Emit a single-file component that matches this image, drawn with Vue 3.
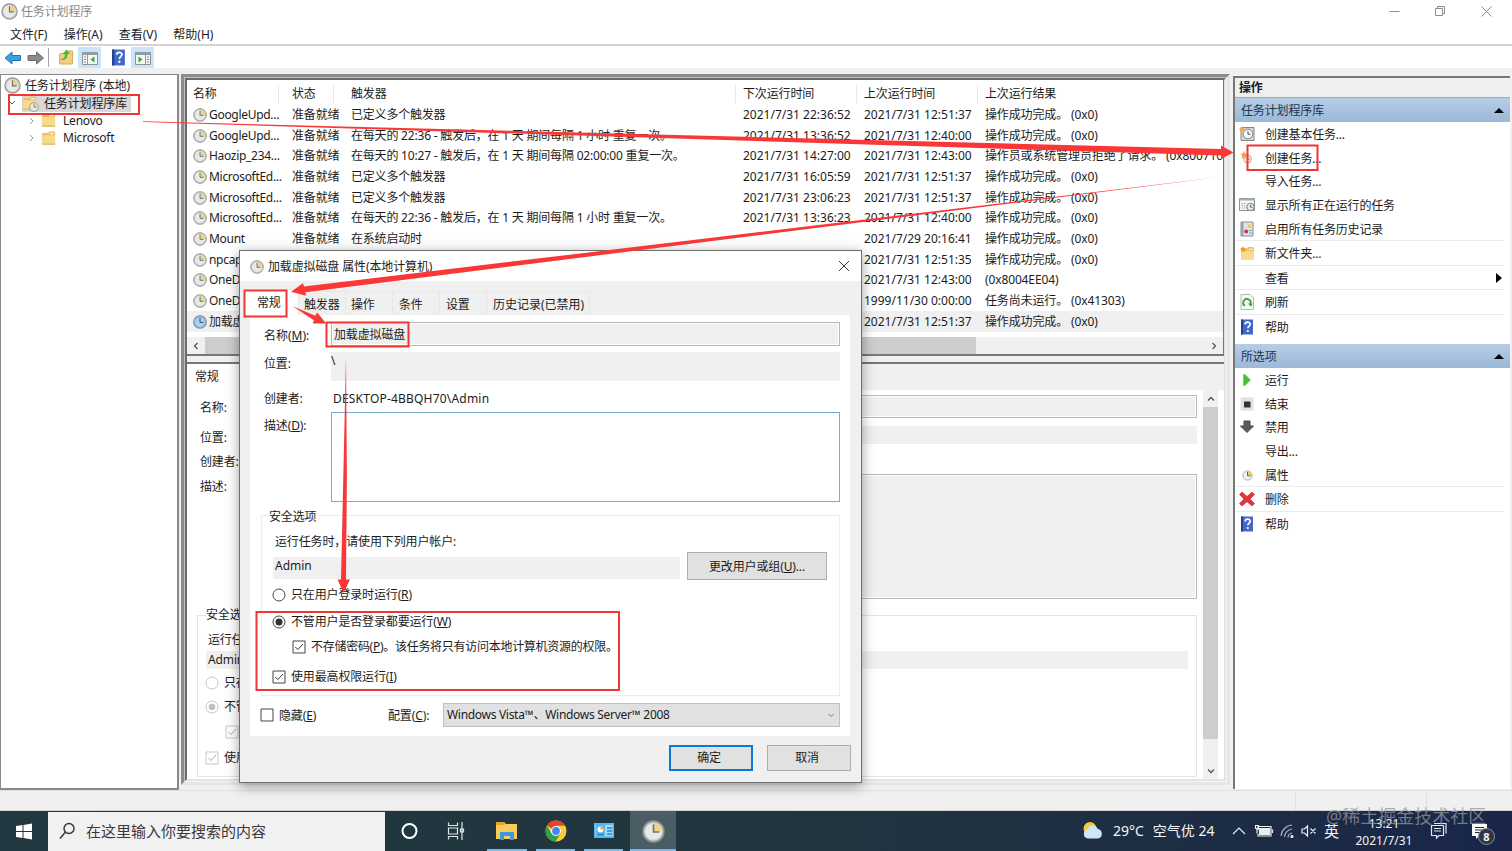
<script setup>
const menus = ['文件(F)', '操作(A)', '查看(V)', '帮助(H)']
const ok = '操作成功完成。 (0x0)'
const tasks = [
  { n: 'GoogleUpd...', t: '已定义多个触发器', next: '2021/7/31 22:36:52', last: '2021/7/31 12:51:37', r: ok },
  { n: 'GoogleUpd...', t: '在每天的 22:36 - 触发后，在 1 天 期间每隔 1 小时 重复一次。', next: '2021/7/31 13:36:52', last: '2021/7/31 12:40:00', r: ok },
  { n: 'Haozip_234...', t: '在每天的 10:27 - 触发后，在 1 天 期间每隔 02:00:00 重复一次。', next: '2021/7/31 14:27:00', last: '2021/7/31 12:43:00', r: '操作员或系统管理员拒绝了请求。 (0x800710' },
  { n: 'MicrosoftEd...', t: '已定义多个触发器', next: '2021/7/31 16:05:59', last: '2021/7/31 12:51:37', r: ok },
  { n: 'MicrosoftEd...', t: '已定义多个触发器', next: '2021/7/31 23:06:23', last: '2021/7/31 12:51:37', r: ok },
  { n: 'MicrosoftEd...', t: '在每天的 22:36 - 触发后，在 1 天 期间每隔 1 小时 重复一次。', next: '2021/7/31 13:36:23', last: '2021/7/31 12:40:00', r: ok },
  { n: 'Mount', t: '在系统启动时', next: '', last: '2021/7/29 20:16:41', r: ok },
  { n: 'npcap', t: '', next: '', last: '2021/7/31 12:51:35', r: ok },
  { n: 'OneD', t: '', next: '', last: '2021/7/31 12:43:00', r: '(0x8004EE04)' },
  { n: 'OneD', t: '', next: '', last: '1999/11/30 0:00:00', r: '任务尚未运行。 (0x41303)' },
  { n: '加载虚', t: '', next: '', last: '2021/7/31 12:51:37', r: ok, sel: true },
]
const groupA = [
  { i: 'basic', t: '创建基本任务...' },
  { i: 'new', t: '创建任务...' },
  { i: '', t: '导入任务...' },
  { i: 'running', t: '显示所有正在运行的任务' },
  { i: 'history', t: '启用所有任务历史记录', line: true },
  { i: 'folder', t: '新文件夹...', line: true },
  { i: '', t: '查看', line: true, more: true },
  { i: 'refresh', t: '刷新', line: true },
  { i: 'help', t: '帮助' },
]
const groupB = [
  { i: 'play', t: '运行' },
  { i: 'stop', t: '结束' },
  { i: 'down', t: '禁用' },
  { i: '', t: '导出...' },
  { i: 'props', t: '属性', line: true },
  { i: 'delete', t: '删除', line: true },
  { i: 'help', t: '帮助' },
]
</script>

<template>
  <div class="screen">
    <svg class="defs" width="0" height="0">
      <defs>
        <symbol id="clock" viewBox="0 0 16 16">
          <circle cx="8" cy="8" r="7.2" fill="#d0d0ce" stroke="#939391" stroke-width="1.1" />
          <circle cx="8" cy="8" r="5.6" fill="#e6ebea" />
          <path d="M8 8V2.400A5.600 5.600 0 0 1 13.600 8z" fill="#ecd583" />
          <path d="M8 3v5.400h4" fill="none" stroke="#6a757a" stroke-width="1.1" />
        </symbol>
        <symbol id="clockblue" viewBox="0 0 16 16">
          <circle cx="8" cy="8" r="7.2" fill="#a3bfd6" stroke="#6f8ba6" stroke-width="1.2" />
          <circle cx="8" cy="8" r="5.4" fill="#a9cfee" />
          <path d="M8 3v5.400h4" fill="none" stroke="#30506d" stroke-width="1.1" />
        </symbol>
        <symbol id="folderi" viewBox="0 0 16 16">
          <path d="M1 3l1-1h6l1-1.400h5l1 1V14H1z" fill="#e9c163" />
          <path d="M1 4.500h14V14H1z" fill="#f8db8a" />
          <path d="M9.500 2.800h4" stroke="#fff" stroke-width="1.200" />
          <path d="M1 14h14" stroke="#d8ad4c" />
        </symbol>
        <symbol id="help" viewBox="0 0 16 16">
          <path d="M2 .5h12v15H2z" fill="#4368c9" />
          <path d="M2 .5h2v15H2z" fill="#24408f" />
          <path d="M6.200 5.400c0-3 5-3 5-.2 0 1.900-2.300 2-2.300 4.100" fill="none" stroke="#fff" stroke-width="1.700" />
          <circle cx="8.800" cy="12" r="1.100" fill="#fff" />
        </symbol>
        <symbol id="basic" viewBox="0 0 16 16">
          <path d="M2 1.500h13v13H2z" fill="#d8d6d0" stroke="#8b8880" />
          <circle cx="9" cy="8" r="4.800" fill="#f5f7f8" stroke="#7c868c" />
          <path d="M9 5v3.200h2.500" fill="none" stroke="#555" />
          <path d="M3 0l1 2 2.200.4L4.600 4 5 6 3 5 1 6l.4-2L0 2.400 2.200 2z" fill="#f2a93b" />
        </symbol>
        <symbol id="new" viewBox="0 0 16 16">
          <circle cx="8.500" cy="9" r="4" fill="#f3e7dc" stroke="#d0a894" />
          <path d="M8.500 7v2.200h2.500" fill="none" stroke="#a98" />
          <path d="M5 1l1.200 2.500L9 4 7 6l.4 2.800L5 7.500 2.600 8.800 3 6 1.500 4l2.300-.5z" fill="#f5a148" />
        </symbol>
        <symbol id="running" viewBox="0 0 16 16">
          <path d="M.5 1.500h15v12H.5z" fill="#f4f4f2" stroke="#8d9296" />
          <path d="M.5 1.500h15v2H.5z" fill="#a9adb0" />
          <path d="M2.500 6.500h4M2.500 8.800h4M2.500 11h4" stroke="#aaa" stroke-dasharray="1.500 1" />
          <circle cx="11.500" cy="10" r="3.700" fill="#e8efe8" stroke="#75827c" />
          <path d="M11.500 8v2.200h2" fill="none" stroke="#4c7a5c" />
        </symbol>
        <symbol id="history" viewBox="0 0 16 16">
          <path d="M2 1h12v14H2z" fill="#dfe3ea" stroke="#848b98" />
          <path d="M2 1h2.500v14H2z" fill="#9aa2b3" />
          <circle cx="10.500" cy="5" r="2" fill="#ead155" />
          <circle cx="7.200" cy="10.500" r="2" fill="#cf3346" />
          <path d="M10 9.500h3M10 12h3" stroke="#8aa0c4" />
        </symbol>
        <symbol id="folder" viewBox="0 0 16 16">
          <path d="M2 4.500l1-1h5l1-1.400h5l1 1V14.500H2z" fill="#e9c163" />
          <path d="M2 6h13v8.500H2z" fill="#f8db8a" />
          <path d="M10 4.200h4" stroke="#fff" />
          <path d="M4 1l1 2 2.200.4L5.600 5 6 7 4 6 2 7l.4-2L1 3.400 3.200 3z" fill="#ef9a25" />
        </symbol>
        <symbol id="refresh" viewBox="0 0 16 16">
          <path d="M2 .5h9l3.500 3.500v11.500H2z" fill="#f8faf8" stroke="#b4bbb4" />
          <path d="M6 11.800A3.700 3.700 0 1 1 11.400 10" fill="none" stroke="#3fa53c" stroke-width="1.900" />
          <path d="M8.700 9.400h5l-1.500 3.400z" fill="#3fa53c" />
        </symbol>
        <symbol id="play" viewBox="0 0 16 16"><path d="M4.500 2.500h1.500L11.500 8 6 13.500H4.500z" fill="#49be35" stroke="#7ed36c" /></symbol>
        <symbol id="stop" viewBox="0 0 16 16"><path d="M1.500 1.500h13v13h-13z" fill="#e2e2e2" /><path d="M5 5.500h6.500v6H5z" fill="#333" /></symbol>
        <symbol id="down" viewBox="0 0 16 16"><path d="M5 2h6v5h3.500L8 13.500 1.500 7H5z" fill="#5b5b5b" stroke="#484848" /></symbol>
        <symbol id="props" viewBox="0 0 16 16">
          <circle cx="8.500" cy="8.500" r="4.600" fill="#eef3f6" stroke="#a3adb3" />
          <path d="M8.500 8.500V4a4.500 4.500 0 0 1 4.500 4.500z" fill="#ecd067" />
          <path d="M8.500 5v3.800h3" fill="none" stroke="#3f6a8c" />
        </symbol>
        <symbol id="delete" viewBox="0 0 16 16">
          <path d="M3 1l5 4.500L13 1l2.500 2.500L11 8l4.500 4.500L13 15l-5-4.300L3 15 .5 12.500 5 8 .5 3.500z" fill="#e2343a" stroke="#b3252b" stroke-width=".6" />
        </symbol>
      </defs>
    </svg>

    <header class="title">
      <svg class="ic17"><use href="#clock" /></svg>
      <span>任务计划程序</span>
      <svg class="winctl" viewBox="0 0 110 14" width="110" height="14">
        <path d="M3.500 7.500h10M49.500 4.500h7v7h-7zM51.500 4.500v-2h7v7h-2M95.500 2.500l10 10M105.500 2.500l-10 10" fill="none" stroke="#8c8c8c" />
      </svg>
    </header>
    <nav class="menu"><span v-for="m in menus" :key="m">{{ m }}</span></nav>
    <div class="toolbar">
      <svg viewBox="0 0 160 24" width="160" height="24">
        <path d="M5 12l7-6v3.500h8.500v5H12V18z" fill="#37a3e4" stroke="#2377b4" />
        <path d="M43.500 12l-7-6v3.500H28v5h8.500V18z" fill="#8b8b8b" stroke="#6d6d6d" />
        <path d="M48.500 2v19" stroke="#a5a5a5" />
        <path d="M59.500 8l6-1 1-2h6v13H59.500z" fill="#f0d080" stroke="#d5ad55" />
        <path d="M61 13c3 0 4-2 4-5h-2.500l4-4.500 3.500 4.500h-2.500c0 4-2 6-6 6z" fill="#4cb53a" />
        <path d="M78 1h23v21H78zM131 1h23v21h-23z" fill="#cce4f7" />
        <path d="M82.500 6.500h15v12h-15zM135.500 6.500h15v12h-15z" fill="#f6f6f6" stroke="#8b9094" />
        <path d="M82 6h16v3H82zM135 6h16v3h-16z" fill="#969b9f" />
        <path d="M87.500 9v9M145.500 9v9" stroke="#9a9a9a" />
        <path d="M84 11h2M84 13.500h2M84 16h2M147 11h2M147 13.500h2M147 16h2" stroke="#888" />
        <path d="M94.500 10.500v6l-4-3zM138.500 10.500v6l4-3z" fill="#39a83a" />
        <use href="#help" x="110" y="3" width="17" height="17" />
      </svg>
    </div>

    <main class="work">
      <aside class="tree">
        <div class="node"><svg class="ic17"><use href="#clock" /></svg><span>任务计划程序 (本地)</span></div>
        <div class="node lib">
          <svg class="chev" viewBox="0 0 8 8"><path d="M1 2l3 3 3-3" fill="none" stroke="#555" /></svg>
          <div class="hl">
            <svg width="17" height="16" viewBox="0 0 17 16"><use href="#folderi" width="15" height="15" /><use href="#clock" x="7" y="6" width="10" height="10" /></svg>
            <span>任务计划程序库</span>
          </div>
        </div>
        <div v-for="f in ['Lenovo', 'Microsoft']" :key="f" class="node sub">
          <svg class="chev" viewBox="0 0 8 8"><path d="M3 1l3 3-3 3" fill="none" stroke="#999" /></svg>
          <svg class="ic15"><use href="#folderi" /></svg><span>{{ f }}</span>
        </div>
      </aside>

      <section class="frame"><div class="frame2"><div class="frame3">
        <div class="list">
          <div class="cols head">
            <span>名称</span><span>状态</span><span>触发器</span><span>下次运行时间</span><span>上次运行时间</span><span>上次运行结果</span>
          </div>
          <div v-for="(k, i) in tasks" :key="i" class="cols row" :class="{ sel: k.sel }">
            <span class="nm"><svg class="ic14"><use :href="k.sel ? '#clockblue' : '#clock'" /></svg>{{ k.n }}</span>
            <span>准备就绪</span><span class="trg">{{ k.t }}</span><span class="num">{{ k.next }}</span><span class="num">{{ k.last }}</span><span>{{ k.r }}</span>
          </div>
          <div class="hscroll">
            <svg viewBox="0 0 8 8"><path d="M5.500 1L2.500 4l3 3" fill="none" stroke="#555" stroke-width="1.300" /></svg>
            <i></i>
            <svg viewBox="0 0 8 8"><path d="M2.500 1l3 3-3 3" fill="none" stroke="#555" stroke-width="1.300" /></svg>
          </div>
        </div>
        <div class="detail">
          <div class="dtabs"><span>常规</span><i></i></div>
          <div class="dbody">
            <div class="dform">
              <div class="drow r1"><label>名称:</label><b class="bx"></b></div>
              <div class="drow r2"><label>位置:</label><b></b></div>
              <div class="drow r3"><label>创建者:</label></div>
              <div class="drow r4"><label>描述:</label><b class="bx"></b></div>
              <div class="dgroup">
                <span class="legend">安全选</span>
                <p>运行任</p>
                <p class="dadmin">Admin</p>
                <p class="opt o1"><svg class="ic14" viewBox="0 0 14 14"><circle cx="7" cy="7" r="6" fill="#fff" stroke="#c6c6c6" /></svg>只在</p>
                <p class="opt o2"><svg class="ic14" viewBox="0 0 14 14"><circle cx="7" cy="7" r="6" fill="#fff" stroke="#c6c6c6" /><circle cx="7" cy="7" r="3.300" fill="#c0c0c0" /></svg>不管</p>
                <p class="opt o3"><svg class="ic14" viewBox="0 0 14 14"><path d="M1 1h12v12H1z" fill="#fff" stroke="#c6c6c6" /><path d="M3.500 7l2.500 2.500L11 4" fill="none" stroke="#aaa" /></svg></p>
                <p class="opt o4"><svg class="ic14" viewBox="0 0 14 14"><path d="M1 1h12v12H1z" fill="#fff" stroke="#c6c6c6" /><path d="M3.500 7l2.500 2.500L11 4" fill="none" stroke="#aaa" /></svg>使用</p>
              </div>
            </div>
            <div class="vscroll">
              <svg viewBox="0 0 8 8"><path d="M1 5.500l3-3 3 3" fill="none" stroke="#555" stroke-width="1.300" /></svg>
              <i></i>
              <svg viewBox="0 0 8 8"><path d="M1 2.500l3 3 3-3" fill="none" stroke="#555" stroke-width="1.300" /></svg>
            </div>
          </div>
        </div>
      </div></div></section>

      <aside class="actions">
        <h3>操作</h3>
        <div class="sec"><span>任务计划程序库</span><i class="up"></i></div>
        <ul class="ga">
          <li v-for="a in groupA" :key="a.t" :class="{ line: a.line }">
            <svg class="ic16"><use v-if="a.i" :href="'#' + a.i" /></svg><span>{{ a.t }}</span><i v-if="a.more" class="more"></i>
          </li>
        </ul>
        <div class="sec"><span>所选项</span><i class="up"></i></div>
        <ul>
          <li v-for="a in groupB" :key="a.t" :class="{ line: a.line }">
            <svg class="ic16"><use v-if="a.i" :href="'#' + a.i" /></svg><span>{{ a.t }}</span>
          </li>
        </ul>
      </aside>
    </main>
    <div class="status"><i></i><i></i></div>

    <footer class="taskbar">
      <div class="start"><svg width="17" height="17" viewBox="0 0 17 17"><path d="M1 3l6.500-1v6H1zM8.500 1.900L17 .5V8H8.500zM1 9h6.500v6L1 14zM8.500 9H17v7.500l-8.500-1.400z" fill="#fff" /></svg></div>
      <div class="search">
        <svg width="18" height="18" viewBox="0 0 18 18"><circle cx="11" cy="6.500" r="5" fill="none" stroke="#333" stroke-width="1.400" /><path d="M7.500 10L2 16.500" stroke="#333" stroke-width="1.400" /></svg>
        <span>在这里输入你要搜索的内容</span>
      </div>
      <div class="app"><svg width="20" height="20" viewBox="0 0 20 20"><circle cx="10.500" cy="10" r="7" fill="none" stroke="#fff" stroke-width="2" /></svg></div>
      <div class="app"><svg width="20" height="20" viewBox="0 0 20 20"><path d="M2.500 1.500v3h9v-3M2.500 18.500v-3h9v3M2.500 7h9v6h-9zM16 1v18M14.500 8h3v3h-3z" fill="none" stroke="#dfe6e8" stroke-width="1.200" /></svg></div>
      <div class="app on w1"><svg width="24" height="22" viewBox="0 0 24 22"><path d="M1 2h8l2 2h11v15H1z" fill="#f7cc5c" /><path d="M1 2h8l1 3H1z" fill="#e6a325" /><path d="M5 20v-8h14v8h-4v-4H9v4z" fill="#3f97dc" /></svg></div>
      <div class="app on w2">
        <svg width="22" height="22" viewBox="0 0 22 22">
          <circle cx="11" cy="11" r="10.500" fill="#fccb35" />
          <path d="M11 11L1.900 5.800A10.500 10.500 0 0 1 20.100 5.800H11z" fill="#e24335" />
          <path d="M1.900 5.800A10.500 10.500 0 0 0 10.500 21.500L15.500 13.500 11 11 6.500 13.500z" fill="#2da14c" />
          <circle cx="11" cy="11" r="5" fill="#fff" /><circle cx="11" cy="11" r="3.900" fill="#4285f4" />
        </svg>
      </div>
      <div class="app on w2">
        <svg width="22" height="20" viewBox="0 0 22 20"><path d="M1 2h20v15H1z" fill="#4fbcf0" /><path d="M2.500 4h17v11h-17z" fill="#a5dcf8" /><path d="M3 4h9v11H3z" fill="#58b6e8" /><circle cx="7.500" cy="8.500" r="3" fill="#fff" /><path d="M7.500 8.500v-3a3 3 0 0 1 3 3z" fill="#f3a33a" /><path d="M4.500 13.500h6M14 7h5M14 10h5M14 13h5" stroke="#2883c2" stroke-width="1.300" /></svg>
      </div>
      <div class="app active"><svg width="23" height="23"><use href="#clock" /></svg></div>
      <div class="weather">
        <svg width="22" height="20" viewBox="0 0 22 20"><circle cx="8" cy="7.500" r="6.500" fill="#f9c643" /><path d="M6 17.500a4.500 4.500 0 0 1-.5-8.900A5.500 5.500 0 0 1 15.800 8a4.900 4.900 0 0 1 .6 9.500z" fill="#cfe6f6" /></svg>
        <span>29°C</span><span>空气优 24</span>
      </div>
      <svg class="tray" width="84" height="20" viewBox="0 0 84 20">
        <g fill="none" stroke="#e8edf2" stroke-width="1.200">
          <path d="M1 13l6-6 6 6" />
          <path d="M27.500 7.500h10v6h-10z" fill="#e8edf2" /><path d="M26 9v-3.500h13v9.500H26v-2M40.500 8.500v3.500M23.500 4.500v3h3v-3zM25 7.500v5" />
          <path d="M49 15A12 12 0 0 1 60 4M52.500 16A8.500 8.500 0 0 1 60 8M56 16.500a5 5 0 0 1 4-4.500" stroke="#a9b3c2" /><circle cx="60" cy="15.500" r="1" fill="#e8edf2" />
          <path d="M70 8h2.500l3-3v10l-3-3H70zM78.500 7.500l5 5M83.500 7.500l-5 5" />
        </g>
      </svg>
      <span class="ime">英</span>
      <div class="time"><span>13:21</span><span>2021/7/31</span></div>
      <svg class="note" width="18" height="18" viewBox="0 0 18 18"><path d="M1.500 3.500h12v10H9l-2.500 2.500v-2.500h-5zM4 1.500h12v10M4 6.500h7M4 9h7" fill="none" stroke="#dfe6ee" stroke-width="1.200" /></svg>
      <div class="bell">
        <svg width="18" height="18" viewBox="0 0 18 18"><path d="M1 2h15v12H8l-3 3v-3H1z" fill="#fff" /><path d="M4 5.500h9M4 8h9M4 10.500h6" stroke="#1b2947" stroke-width="1.200" /></svg>
        <b>8</b>
      </div>
    </footer>

    <section class="dialog">
      <div class="dlgtitle">
        <svg class="ic14"><use href="#clock" /></svg><span>加载虚拟磁盘 属性(本地计算机)</span>
        <svg width="12" height="12" viewBox="0 0 12 12"><path d="M1 1l10 10M11 1L1 11" stroke="#333" /></svg>
      </div>
      <div class="tabs"><span class="cur">常规</span><span>触发器</span><span>操作</span><span>条件</span><span>设置</span><span>历史记录(已禁用)</span></div>
      <div class="page">
        <div class="f f1"><label>名称(<u>M</u>):</label><div class="inp"><span>加载虚拟磁盘</span></div></div>
        <div class="f f2"><label>位置:</label><div class="fill">\</div></div>
        <div class="f f3"><label>创建者:</label><span>DESKTOP-4BBQH70\Admin</span></div>
        <div class="f f4"><label>描述(<u>D</u>):</label><div class="area"></div></div>
        <div class="group">
          <span class="legend">安全选项</span>
          <p class="tip">运行任务时，请使用下列用户帐户:</p>
          <div class="acct"><div>Admin</div><button>更改用户或组(<u>U</u>)...</button></div>
          <p class="opt a"><svg class="ic14" viewBox="0 0 14 14"><circle cx="7" cy="7" r="6" fill="#fff" stroke="#444" /></svg>只在用户登录时运行(<u>R</u>)</p>
          <p class="opt b"><svg class="ic14" viewBox="0 0 14 14"><circle cx="7" cy="7" r="6" fill="#fff" stroke="#444" /><circle cx="7" cy="7" r="3.500" fill="#333" /></svg>不管用户是否登录都要运行(<u>W</u>)</p>
          <p class="opt c"><svg class="ic14" viewBox="0 0 14 14"><path d="M1 1h12v12H1z" fill="#fff" stroke="#444" /><path d="M3.300 7l2.500 2.500L11 4" fill="none" stroke="#333" /></svg>不存储密码(<u>P</u>)。该任务将只有访问本地计算机资源的权限。</p>
          <p class="opt d"><svg class="ic14" viewBox="0 0 14 14"><path d="M1 1h12v12H1z" fill="#fff" stroke="#444" /><path d="M3.300 7l2.500 2.500L11 4" fill="none" stroke="#333" /></svg>使用最高权限运行(<u>I</u>)</p>
        </div>
        <div class="conf">
          <svg class="ic14" viewBox="0 0 14 14"><path d="M1 1h12v12H1z" fill="#fff" stroke="#444" /></svg>
          <span class="hid">隐藏(<u>E</u>)</span><span class="cfg">配置(<u>C</u>):</span>
          <div class="select"><span>Windows Vista™、Windows Server™ 2008</span><svg width="8" height="8" viewBox="0 0 8 8"><path d="M1.500 3L4 5.500 6.500 3" fill="none" stroke="#777" /></svg></div>
        </div>
      </div>
      <div class="btns"><button class="ok">确定</button><button>取消</button></div>
    </section>

    <svg class="marks" viewBox="0 0 1512 851" width="1512" height="851">
      <g fill="none" stroke="#f03535" stroke-width="2">
        <rect x="9" y="95" width="130" height="19" />
        <rect x="1247.500" y="145.500" width="70" height="24.500" />
        <rect x="244.500" y="290.500" width="42" height="26" />
        <rect x="326.500" y="322.500" width="82" height="24" />
        <rect x="256.500" y="612" width="362.500" height="78" />
      </g>
      <g fill="#fa3737">
        <path d="M143 121.300L1221 149v-3.500l12.500 7L1221 159v-3.500L143 122z" />
        <path d="M1220 177L304 286.500l-1-3.300-12 8.600 15 4-.6-3.500z" />
        <path d="M292.700 306.300l22.500 9.500 2-3.200 9 10.800-13.500 0 1.200-3.200z" />
        <path d="M346 357l.9 120-.9 102.500h4L343.500 593 337.500 579.500h3.500z" />
      </g>
    </svg>
    <div class="mark">@稀土掘金技术社区</div>
  </div>
</template>

<style>
html, body { margin: 0; overflow: hidden; }
</style>

<style scoped>
.screen { position: relative; width: 1512px; height: 851px; overflow: hidden; display: flex; flex-direction: column; background: #f0f0f0; color: #1c1c1c; font: 12px/18px "Noto Sans", "Noto Sans CJK SC", sans-serif; letter-spacing: -.13px; white-space: nowrap; }
.screen * { box-sizing: border-box; }
svg { flex: none; display: block; }
.defs { position: absolute; }
p, ul, h3 { margin: 0; padding: 0; list-style: none; }
.ic17 { width: 17px; height: 17px; }
.ic16 { width: 16px; height: 16px; }
.ic15 { width: 15px; height: 15px; }
.ic14 { width: 14px; height: 14px; }
u { text-underline-offset: 1px; }

.title { height: 23px; flex: none; display: flex; align-items: center; background: #fff; color: #8a8a8a; padding-left: 1px; gap: 3px; }
.title span { padding-top: 1px; }
.winctl { margin-left: auto; margin-right: 16px; margin-top: -2px; }
.menu { height: 23px; flex: none; display: flex; align-items: center; gap: 16.200px; padding: 2px 0 0 10px; background: #fff; border-bottom: 2px solid #d4d4d4; letter-spacing: 0; }
.toolbar { height: 22px; flex: none; background: #fff; }
.work { height: 722px; flex: none; display: flex; padding-top: 6px; }

.tree { width: 179px; height: 716px; background: #fff; border: 1px solid #8a8a8a; border-width: 1px 2px 2px 1px; padding-top: 2px; }
.node { height: 17.500px; display: flex; align-items: center; padding-left: 3px; gap: 4px; }
.lib { padding-left: 7px; gap: 6px; }
.hl { display: flex; align-items: center; gap: 5px; padding: 0 4px 0 0; background: #d9d9d9; height: 16px; margin-top: 1px; }
.sub { padding-left: 26px; gap: 6px; letter-spacing: -.2px; }
.sub span { margin-left: 1px; }
.chev { width: 8px; height: 8px; }

.frame { margin-left: 2px; width: 1049px; height: 711px; border: 3px solid; border-color: #8c8c8c #e6e6e6 #e6e6e6 #8c8c8c; }
.frame2 { height: 100%; border: 1px solid; border-color: #c0c0c0 #f6f6f6 #f6f6f6 #c0c0c0; }
.frame3 { height: 100%; border: 2px solid; border-color: #6c6c6c #e4e4e4 #e4e4e4 #6c6c6c; background: #f0f0f0; }
.list { height: 276px; background: #fff; border-right: 1px solid #777; border-bottom: 2px solid #777; overflow: hidden; }
.cols { display: grid; grid-template-columns: 99px 59px 392px 121px 121px 1fr; padding-left: 6px; align-items: center; }
.cols > span { height: 18px; }
.head { height: 24.500px; padding-top: 3px; }
.head > span { border-right: 1px solid #e8e8e8; margin-right: 7px; }
.head > span:first-child { margin-right: 13px; }
.head > span:nth-child(2) { margin-right: 17px; }
.head > span:last-child { border: 0; }
.row { height: 20.700px; }
.sel { background: #f0f0f0; }
.nm { display: flex; align-items: center; gap: 2px; letter-spacing: -.3px; }
.trg { letter-spacing: -.2px; }
.num { letter-spacing: 0; }
.hscroll { margin-top: 5px; height: 17px; background: #f0f0f0; display: flex; align-items: center; padding: 0 5px; }
.hscroll svg { width: 8px; height: 8px; }
.hscroll i { width: 771px; height: 17px; background: #cdcdcd; margin: 0 auto 0 5px; }

.detail { margin-top: 6px; height: 417px; background: #fff; border-top: 2px solid #777; }
.dtabs { height: 26px; display: flex; }
.dtabs span { width: 52px; padding: 4px 0 0 8px; }
.dtabs i { flex: 1; background: #f0f0f0; }
.dbody { display: flex; height: 389px; padding-right: 6px; }
.dform { width: 1010px; padding: 5px 0 0 13px; flex: none; }
.drow { display: flex; }
.drow label { width: 60px; padding-top: 4px; }
.drow b { flex: 1; background: #f0f0f0; }
.drow .bx { border: 1px solid #b9b9b9; box-shadow: inset 0 0 0 1px #fff; }
.r1 { height: 23px; margin-bottom: 8px; }
.r2 { height: 18px; margin-bottom: 7px; }
.r2 label { padding-top: 3px; }
.r3 { height: 22px; }
.r3 label { padding-top: 2px; }
.r4 { height: 125px; }
.r4 { margin-top: 1px; }
.dgroup { margin: 16px 0 0 -3px; height: 162px; border: 1px solid #e4e4e4; padding-left: 8px; }
.legend { display: block; width: max-content; height: 18px; margin-top: -10px; background: #fff; padding-right: 3px; }
.dgroup p { height: 18px; }
.dgroup p:nth-of-type(1) { margin: 7px 0 0 2px; }
.dgroup .dadmin { margin: 2px 8px 0 0; background: #f0f0f0; padding-left: 2px; line-height: 17px; }
.opt { display: flex; align-items: center; height: 18px; }
.opt svg { margin-right: 5px; }
.dgroup .o1 { margin-top: 5px; margin-left: -1px; }
.dgroup .o2 { margin-top: 6px; margin-left: -1px; }
.dgroup .o3 { margin-top: 7px; margin-left: 19px; }
.dgroup .o4 { margin-top: 8px; margin-left: -1px; }
.vscroll { margin-left: auto; width: 15px; background: #f0f0f0; display: flex; flex-direction: column; align-items: center; padding: 5px 0 4px; }
.vscroll svg { width: 8px; height: 8px; }
.vscroll i { width: 15px; height: 332px; background: #cdcdcd; margin: 4px 0 auto; }

.actions { margin: 2px 2px 0 3px; flex: 1; height: 713px; background: #fff; border-top: 2px solid #777; border-left: 2px solid #777; }
.actions h3 { height: 20px; background: #f0f0f0; border-bottom: 1px solid #a8a8a8; font-size: 12px; line-height: 19px; padding-left: 4px; }
.sec { height: 24px; display: flex; align-items: center; justify-content: space-between; padding: 0 6px; background: linear-gradient(#b6cde6, #9bb8d8); color: #1e3350; }
.sec span { padding-top: 2px; }
.up { border: 5px solid transparent; border-top: 0; border-bottom: 5px solid #000; }
.more { margin-left: auto; margin-right: 2px; border: 5px solid transparent; border-right: 0; border-left: 6px solid #000; }
.actions li { height: 23.700px; display: flex; align-items: center; padding-left: 4px; margin-right: 6px; }
.actions li span { margin-left: 10px; padding-top: 2px; letter-spacing: -.2px; }
.actions li.line { height: 24.500px; border-bottom: 1px solid #ebebeb; }
.ga { height: 222px; }

.status { height: 21px; flex: none; border-top: 1px solid #e0e0e0; border-bottom: 1px solid #d2d2d2; display: flex; padding-left: 1295px; gap: 130px; }
.status i { width: 1px; background: #e0e0e0; }

.taskbar { height: 40px; flex: none; display: flex; align-items: center; background: linear-gradient(90deg, #213840 0%, #21363f 50%, #1e2e42 75%, #19264a 100%); color: #f2f5f7; letter-spacing: 0; }
.start { width: 48px; display: flex; justify-content: center; padding-right: 2px; }
.search { width: 337px; height: 39px; background: #f1f1f1; display: flex; align-items: center; padding-left: 10px; gap: 10px; color: #3a3a3a; font-size: 15px; }
.app { width: 48px; height: 40px; display: flex; align-items: center; justify-content: center; }
.app:nth-child(4) { width: 46px; }
.on { border-bottom: 2px solid #76b9ed; width: 40px; padding-top: 2px; }
.w1 { margin-left: 8px; }
.w2 { margin-left: 9px; width: 39px; }
.active { margin-left: 7px; width: 46px; background: #4a5d64; border-bottom: 2px solid #76b9ed; padding-top: 2px; }
.weather { margin-left: 406px; width: 150px; display: flex; align-items: center; font-size: 14px; gap: 9px; }
.ime { font-size: 15px; margin-left: 8px; width: 15px; }
.time { width: 90px; display: flex; flex-direction: column; align-items: center; line-height: 17px; padding-top: 1px; }
.note { margin-left: 1px; margin-right: 23px; }
.bell { position: relative; }
.bell b { position: absolute; left: 7px; top: 6px; width: 17px; height: 17px; border-radius: 50%; background: #30363f; border: 1px solid #8b919b; font-size: 11px; line-height: 15px; text-align: center; }

.dialog { position: absolute; left: 239px; top: 250px; width: 623px; height: 533px; background: #f0f0f0; border: 1px solid #6e6e6e; box-shadow: 0 3px 12px rgba(0, 0, 0, .38); }
.dlgtitle { height: 30px; background: #fff; display: flex; align-items: center; padding: 0 11px 0 10px; gap: 4px; }
.dlgtitle span { padding-top: 2px; }
.dlgtitle svg:first-child { margin-top: 2px; }
.dlgtitle svg:last-child { margin-left: auto; }
.tabs { height: 34px; display: flex; align-items: flex-end; padding-left: 5px; }
.tabs span { height: 24px; line-height: 25px; padding-left: 5px; width: 47px; border-right: 1px solid #e6e6e6; border-top: 1px solid #e8e8e8; }
.tabs .cur { width: 54px; height: 26px; padding-left: 12px; background: #fff; line-height: 25px; }
.tabs span:nth-child(4), .tabs span:nth-child(5) { padding-left: 6px; }
.tabs span:last-child { width: 103px; padding-left: 6px; letter-spacing: 0; }
.page { margin-left: 10px; width: 600px; height: 421px; background: #fff; padding: 7px 10px 0 11px; }
.f { display: flex; padding-left: 3px; }
.f label { width: 67px; flex: none; }
.f1 { height: 24px; align-items: center; }
.f1 label { padding-top: 3px; letter-spacing: 0; }
.inp { flex: 1; height: 24px; background: #f0f0f0; border: 1px solid #b8b8b8; box-shadow: inset 0 0 0 1px #fff; padding: 3px 2px; }
.f2 { margin-top: 6px; height: 29px; }
.f2 label { padding-top: 3px; }
.fill { flex: 1; background: #f0f0f0; line-height: 18px; }
.f3 { height: 31px; align-items: center; padding-top: 4px; }
.f3 span { padding-left: 2px; letter-spacing: .2px; }
.f4 { height: 90px; }
.f4 label { padding-top: 5px; }
.area { flex: 1; border: 1px solid #74acd2; }
.group { margin-top: 13px; height: 181px; border: 1px solid #ececec; padding-left: 11px; }
.group .legend { margin-left: -4px; margin-top: -8px; }
.tip { margin: 7px 0 0 2px; }
.acct { display: flex; margin: 1px 12px 0 0; height: 28px; }
.acct div { width: 407px; height: 22px; margin-top: 5px; background: #f0f0f0; padding-left: 2px; letter-spacing: 0; }
button { font: inherit; letter-spacing: inherit; color: inherit; background: #e1e1e1; border: 1px solid #adadad; padding: 1px 0 0; }
.acct button { width: 140px; margin-left: 7px; }
.opt.a, .opt.b, .opt.c, .opt.d { margin-left: -1px; line-height: 20px; letter-spacing: -.15px; }
.group .a { margin-top: 6px; }
.group .b { margin-top: 9px; }
.group .c { margin-top: 7px; }
.group .d { margin-top: 12px; }
.group .opt.c { margin-left: 19px; letter-spacing: -.28px; }
.conf { margin-top: 7px; height: 24px; display: flex; align-items: center; margin-left: -1px; }
.hid { margin-left: 5px; width: 109px; padding-top: 1px; }
.cfg { width: 55px; padding-top: 1px; }
.select { flex: 1; height: 24px; background: #e1e1e1; border: 1px solid #c0c0c0; display: flex; align-items: center; justify-content: space-between; padding: 0 4px 0 3px; letter-spacing: -.3px; }
.btns { display: flex; padding: 9px 10px 0 0; justify-content: flex-end; gap: 14px; }
.btns button { width: 84px; height: 26px; padding: 0 4px 0 0; }
.btns .ok { border: 2px solid #0f78d4; }

.marks { position: absolute; left: 0; top: 0; }
.mark { position: absolute; left: 1326px; top: 803px; font-size: 18px; line-height: 26px; letter-spacing: 0; color: rgba(150, 150, 155, .75); }
</style>
